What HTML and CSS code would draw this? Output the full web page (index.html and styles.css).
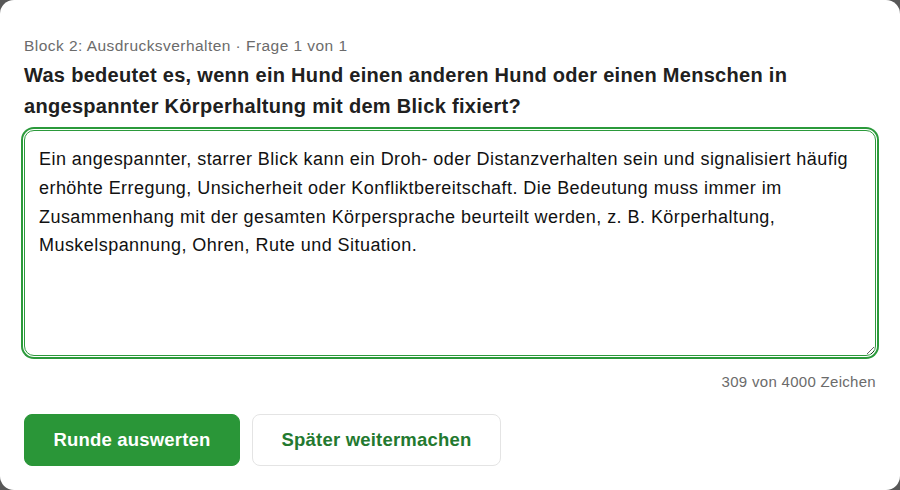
FILE: index.html
```html
<!DOCTYPE html>
<html lang="de">
<head>
<meta charset="utf-8">
<title>Frage</title>
<link rel="stylesheet" href="styles.css">
</head>
<body>
<main class="card">
  <p class="meta">Block 2: Ausdrucksverhalten · Frage 1 von 1</p>
  <h1 class="question">Was bedeutet es, wenn ein Hund einen anderen Hund oder einen Menschen in angespannter Körperhaltung mit dem Blick fixiert?</h1>
  <textarea class="answer" spellcheck="false">Ein angespannter, starrer Blick kann ein Droh- oder Distanzverhalten sein und signalisiert häufig erhöhte Erregung, Unsicherheit oder Konfliktbereitschaft. Die Bedeutung muss immer im Zusammenhang mit der gesamten Körpersprache beurteilt werden, z. B. Körperhaltung, Muskelspannung, Ohren, Rute und Situation.</textarea>
  <p class="counter">309 von 4000 Zeichen</p>
  <div class="actions">
    <button class="btn btn-primary" type="button">Runde auswerten</button>
    <button class="btn btn-secondary" type="button">Später weitermachen</button>
  </div>
</main>
</body>
</html>
```

FILE: styles.css
```css
* { box-sizing: border-box; }

html, body {
  margin: 0;
  height: 100%;
}

body {
  background: #585858;
  font-family: "Liberation Sans", Arial, sans-serif;
  color: #1f1f1f;
}

.card {
  width: 900px;
  height: 490px;
  background: #ffffff;
  border-radius: 14px;
  padding: 36px 24px 24px;
  display: flex;
  flex-direction: column;
}

.meta {
  margin: 0;
  font-size: 15.5px;
  line-height: 20px;
  letter-spacing: 0.45px;
  color: #6b6b6b;
}

.question {
  margin: 4px 0 0;
  font-size: 20px;
  line-height: 31px;
  letter-spacing: 0.3px;
  font-weight: 700;
  color: #202020;
}

.answer {
  display: block;
  margin: 8px 0 0;
  width: 100%;
  height: 226px;
  padding: 14px;
  border: 1px solid #2b9a3b;
  border-radius: 10px;
  box-shadow: 0 0 0 1px #ffffff, 0 0 0 3px #2b9a3b;
  outline: none;
  font-family: "Liberation Sans", Arial, sans-serif;
  font-size: 18px;
  line-height: 28.8px;
  letter-spacing: 0.45px;
  color: #111111;
  background: #ffffff;
  resize: vertical;
}

.counter {
  margin: 16px 0 0;
  text-align: right;
  font-size: 15px;
  line-height: 20px;
  letter-spacing: 0.3px;
  color: #6b6b6b;
}

.actions {
  margin-top: 22px;
  display: flex;
  gap: 12px;
}

.btn {
  height: 52px;
  border-radius: 8px;
  font-family: "Liberation Sans", Arial, sans-serif;
  font-size: 18.5px;
  font-weight: 700;
  letter-spacing: 0.2px;
  cursor: pointer;
}

.btn-primary {
  width: 216px;
  background: #2a9638;
  border: 1px solid #2a9638;
  color: #ffffff;
}

.btn-secondary {
  width: 249px;
  background: #ffffff;
  border: 1px solid #e4e4e4;
  color: #23792f;
}
```
